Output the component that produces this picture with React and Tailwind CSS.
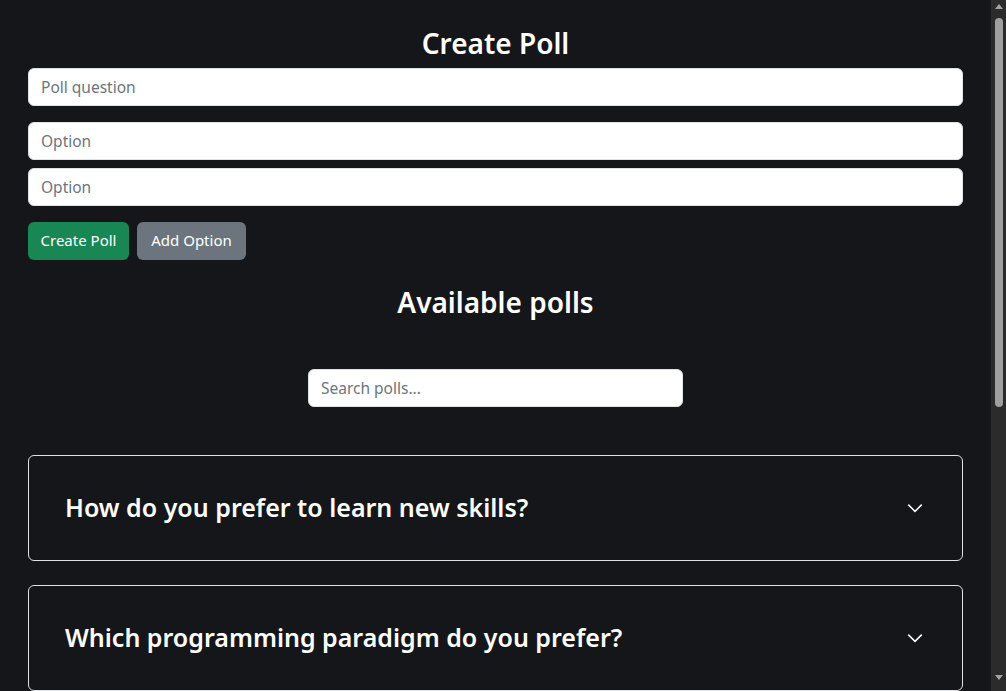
import React, { useState } from "react";

const polls = [
  "How do you prefer to learn new skills?",
  "Which programming paradigm do you prefer?",
  "What is your favorite frontend framework?",
  "How many hours do you code per week?",
];

const inputCls =
  "w-full h-[38px] rounded-[6px] border border-[#dee2e6] bg-white px-3 text-[15.5px] text-[#212529] placeholder:text-[#6c757d] outline-none";

const Chevron = () => (
  <svg width="18" height="18" viewBox="0 0 16 16" fill="none" stroke="#ffffff" strokeWidth="1.3">
    <path d="M2 5l6 6 6-6" />
  </svg>
);

// fake browser scrollbar, as in the screenshot
const ScrollBar = () => (
  <div className="flex w-[15px] shrink-0 flex-col items-center bg-[#2b2b2b]">
    <div className="mt-[4px] h-0 w-0 border-x-[4px] border-b-[5px] border-x-transparent border-b-[#a3a3a3]" />
    <div className="mt-[9px] h-[389px] w-[8px] rounded-full bg-[#9f9f9f]" />
    <div className="flex-1" />
    <div className="mb-[11px] h-0 w-0 border-x-[4px] border-t-[5px] border-x-transparent border-t-[#a3a3a3]" />
  </div>
);

const App = () => {
  const [options, setOptions] = useState(["", ""]);

  return (
    <div
      className="flex h-screen overflow-hidden bg-[#151619] text-white"
      style={{ fontFamily: '"Noto Sans", "Open Sans", sans-serif' }}
    >
      <div className="min-w-0 flex-1 px-[28px]">
        {/* create poll */}
        <h2 className="pt-[27px] text-center text-[28px] font-semibold leading-[1.2] mb-[7px]">
          Create Poll
        </h2>
        <input className={inputCls} placeholder="Poll question" />

        <div className="mt-4 flex flex-col gap-2">
          {options.map((o, i) => (
            <input key={i} className={inputCls} placeholder="Option" />
          ))}
        </div>

        <div className="mt-4 flex gap-2">
          <button className="h-[38px] w-[101px] rounded-[6px] bg-[#198754] text-[15px] text-white">
            Create Poll
          </button>
          <button
            onClick={() => setOptions([...options, ""])}
            className="h-[38px] w-[109px] rounded-[6px] bg-[#6c757d] text-[15px] text-white"
          >
            Add Option
          </button>
        </div>

        {/* available polls */}
        <h2 className="mt-[26px] text-center text-[28px] font-semibold leading-[1.2]">
          Available polls
        </h2>

        <div className="mt-[50px] flex justify-center">
          <input className={inputCls + " !w-[375px]"} placeholder="Search polls..." />
        </div>

        <div className="mt-[48px] flex flex-col gap-[24px]">
          {polls.map((p) => (
            <div
              key={p}
              className="flex h-[106px] shrink-0 items-center justify-between rounded-[6px] border border-[#dee2e6] pl-[36px] pr-[38px]"
            >
              <h3 className="text-[25px] font-semibold">{p}</h3>
              <Chevron />
            </div>
          ))}
        </div>
      </div>
      <ScrollBar />
    </div>
  );
};

export default App;
